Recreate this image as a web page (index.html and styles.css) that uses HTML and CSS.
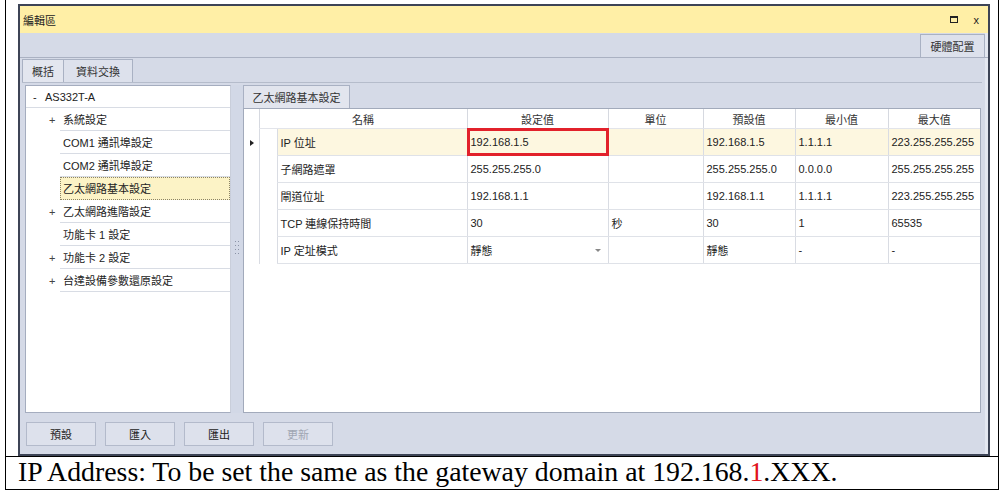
FILE: index.html
```html
<!DOCTYPE html>
<html lang="zh-Hant">
<head>
    <meta charset="UTF-8">
    <title>編輯區</title>
    <link rel="stylesheet" href="styles.css">
</head>
<body>
    <div class="doc">
        <div class="shot">
            <div class="window">
                <div class="titlebar">
                    <span class="title">編輯區</span>
                    <div class="ctrls">
                        <span class="max-btn"></span>
                        <span class="close-btn">x</span>
                    </div>
                </div>
                <div class="win-body">
                    <div class="top-tabs">
                        <div class="tab hw-tab">硬體配置</div>
                    </div>
                    <div class="main">
                        <div class="sub-tabs">
                            <div class="tab sub-tab active">概括</div>
                            <div class="tab sub-tab">資料交換</div>
                        </div>
                        <div class="workspace">
                            <div class="tree">
                                <div class="tree-root"><span class="exp">-</span>AS332T-A</div>
                                <div class="tree-row"><span class="exp">+</span><span class="label">系統設定</span></div>
                                <div class="tree-row"><span class="exp"></span><span class="label">COM1 通訊埠設定</span></div>
                                <div class="tree-row"><span class="exp"></span><span class="label">COM2 通訊埠設定</span></div>
                                <div class="tree-row"><span class="exp"></span><span class="label selected">乙太網路基本設定</span></div>
                                <div class="tree-row"><span class="exp">+</span><span class="label">乙太網路進階設定</span></div>
                                <div class="tree-row"><span class="exp"></span><span class="label">功能卡 1 設定</span></div>
                                <div class="tree-row"><span class="exp">+</span><span class="label">功能卡 2 設定</span></div>
                                <div class="tree-row"><span class="exp">+</span><span class="label">台達設備參數還原設定</span></div>
                            </div>
                            <div class="splitter">
                                <svg class="grip" width="4" height="14" viewBox="0 0 4 14">
                                    <g fill="#8a92a6">
                                        <rect x="0" y="0" width="1" height="1"/><rect x="3" y="0" width="1" height="1"/>
                                        <rect x="0" y="4" width="1" height="1"/><rect x="3" y="4" width="1" height="1"/>
                                        <rect x="0" y="8" width="1" height="1"/><rect x="3" y="8" width="1" height="1"/>
                                        <rect x="0" y="12" width="1" height="1"/><rect x="3" y="12" width="1" height="1"/>
                                    </g>
                                </svg>
                            </div>
                            <div class="detail">
                                <div class="detail-tabs">
                                    <div class="tab detail-tab">乙太網路基本設定</div>
                                </div>
                                <div class="grid-box">
                                    <table class="grid">
                                        <colgroup>
                                            <col style="width:15px"><col style="width:18px"><col style="width:190px">
                                            <col style="width:141px"><col style="width:95px"><col style="width:92px">
                                            <col style="width:93px"><col style="width:92px">
                                        </colgroup>
                                        <thead>
                                            <tr>
                                                <th class="ind"></th>
                                                <th colspan="2">名稱</th>
                                                <th>設定值</th>
                                                <th>單位</th>
                                                <th>預設值</th>
                                                <th>最小值</th>
                                                <th>最大值</th>
                                            </tr>
                                        </thead>
                                        <tbody>
                                            <tr class="current">
                                                <td class="ind"><span class="arrow"></span></td>
                                                <td class="indent"></td>
                                                <td>IP 位址</td>
                                                <td class="boxed">192.168.1.5</td>
                                                <td></td>
                                                <td>192.168.1.5</td>
                                                <td>1.1.1.1</td>
                                                <td>223.255.255.255</td>
                                            </tr>
                                            <tr>
                                                <td class="ind"></td>
                                                <td class="indent"></td>
                                                <td>子網路遮罩</td>
                                                <td>255.255.255.0</td>
                                                <td></td>
                                                <td>255.255.255.0</td>
                                                <td>0.0.0.0</td>
                                                <td>255.255.255.255</td>
                                            </tr>
                                            <tr>
                                                <td class="ind"></td>
                                                <td class="indent"></td>
                                                <td>閘道位址</td>
                                                <td>192.168.1.1</td>
                                                <td></td>
                                                <td>192.168.1.1</td>
                                                <td>1.1.1.1</td>
                                                <td>223.255.255.255</td>
                                            </tr>
                                            <tr>
                                                <td class="ind"></td>
                                                <td class="indent"></td>
                                                <td>TCP 連線保持時間</td>
                                                <td>30</td>
                                                <td>秒</td>
                                                <td>30</td>
                                                <td>1</td>
                                                <td>65535</td>
                                            </tr>
                                            <tr>
                                                <td class="ind"></td>
                                                <td class="indent"></td>
                                                <td>IP 定址模式</td>
                                                <td class="combo">靜態<span class="drop"></span></td>
                                                <td></td>
                                                <td>靜態</td>
                                                <td>-</td>
                                                <td>-</td>
                                            </tr>
                                        </tbody>
                                    </table>
                                </div>
                            </div>
                        </div>
                        <div class="buttons">
                            <button class="btn">預設</button>
                            <button class="btn">匯入</button>
                            <button class="btn">匯出</button>
                            <button class="btn" disabled>更新</button>
                        </div>
                    </div>
                </div>
            </div>
        </div>
        <div class="caption">IP Address: To be set the same as the gateway domain at 192.168.<span class="red">1</span>.XXX.</div>
    </div>
</body>
</html>
```

FILE: styles.css
```css
body {
    margin: 0;
    background-color: #fff;
    font-family: "Liberation Sans", "Noto Sans CJK TC", sans-serif;
    font-size: 11px;
    color: #222;
}

.doc {
    box-sizing: border-box;
    width: 994px;
    margin-left: 5px;
    border-left: 1px solid #000;
    border-right: 1px solid #000;
    border-bottom: 1px solid #000;
}

.shot {
    height: 456px;
    padding: 4px 0 0 12px;
    box-sizing: border-box;
}

.window {
    box-sizing: border-box;
    width: 972px;
    height: 452px;
    border: 2px solid #3d4456;
    display: flex;
    flex-direction: column;
    background-color: #d5dae7;
}

.titlebar {
    height: 27px;
    background-color: #ffefa6;
    display: flex;
    align-items: center;
    justify-content: space-between;
    padding: 0 9px 0 3px;
}

.title {
    font-size: 11px;
    color: #222;
}

.ctrls {
    display: flex;
    align-items: center;
    gap: 16px;
}

.max-btn {
    width: 6px;
    height: 4px;
    border: 1px solid #222;
    border-top-width: 2px;
}

.close-btn {
    font-size: 11px;
    color: #222;
}

.win-body {
    flex: 1;
    display: flex;
    flex-direction: column;
    box-shadow: inset -3px 0 0 #e4e8f1;
}

.tab {
    box-sizing: border-box;
    border: 1px solid #a9b1c3;
    border-bottom: none;
    display: flex;
    align-items: center;
    justify-content: center;
    background-color: #dde1ec;
    color: #333;
}

.top-tabs {
    height: 24px;
    display: flex;
    justify-content: flex-end;
    align-items: flex-end;
    border-bottom: 1px solid #aab1c2;
    padding-right: 3px;
}

.hw-tab {
    width: 65px;
    height: 23px;
}

.main {
    flex: 1;
    display: flex;
    flex-direction: column;
    padding: 0 6px 0 2px;
}

.sub-tabs {
    display: flex;
    height: 23px;
    margin-top: 1px;
}

.sub-tab {
    height: 23px;
    padding: 0 9px;
}

.sub-tab + .sub-tab {
    border-left: none;
    padding: 0 12px;
}

.sub-tab.active {
    background-color: #e3e6ef;
}

.workspace {
    height: 331px;
    box-sizing: border-box;
    border-top: 1px solid #b5bccb;
    padding: 2px 0 0 3px;
    display: flex;
}

.tree {
    box-sizing: border-box;
    width: 206px;
    height: 328px;
    background-color: #fff;
    border: 1px solid #a5adbf;
    border-right-color: #c9ceda;
}

.tree-root {
    height: 22px;
    box-sizing: border-box;
    border-bottom: 1px solid #d8dce4;
    display: flex;
    align-items: center;
    padding-left: 7px;
}

.tree-root .exp {
    width: 12px;
}

.tree-row {
    height: 23px;
    display: flex;
}

.tree-row .exp {
    width: 34px;
    padding: 3px 0 0 23px;
    box-sizing: border-box;
    line-height: 19px;
    color: #444;
}

.tree-row .label {
    flex: 1;
    box-sizing: border-box;
    border-bottom: 1px solid #d8dce4;
    padding: 3px 0 0 3px;
    line-height: 19px;
}

.tree-row .label.selected {
    background-color: #fcf3c6;
    border: 1px dotted #8c8466;
    padding: 2px 0 0 2px;
    line-height: 19px;
}

.splitter {
    width: 12px;
    display: flex;
    justify-content: center;
    background-color: #d2d8e6;
}

.grip {
    margin-top: 156px;
}

.detail {
    width: 738px;
    display: flex;
    flex-direction: column;
}

.detail-tabs {
    display: flex;
    height: 23px;
}

.detail-tab {
    width: 107px;
    height: 23px;
    background-color: #e2e5ee;
}

.grid-box {
    flex: 1;
    background-color: #fff;
    border: 1px solid #a2aabb;
}

.grid {
    border-collapse: collapse;
    table-layout: fixed;
    width: 736px;
}

.grid th {
    height: 19px;
    font-weight: normal;
    color: #333;
    border-left: 1px solid #d6d9e0;
    border-bottom: 1px solid #e2e4ea;
    padding: 0;
}

.grid td {
    height: 26px;
    padding: 0 0 0 3px;
    border-left: 1px solid #d9dce3;
    border-bottom: 1px solid #dfe2e8;
    white-space: nowrap;
    position: relative;
}

.grid th.ind,
.grid td.ind {
    border-left: none;
    border-bottom: none;
}

.grid td.indent {
    border-bottom: none;
}

.grid tr.current td {
    background-color: #fdf7e0;
}

.grid tr.current td.ind,
.grid tr.current td.indent {
    background-color: #fff;
}

.arrow {
    display: inline-block;
    width: 0;
    height: 0;
    margin-left: 3px;
    border-top: 3px solid transparent;
    border-bottom: 3px solid transparent;
    border-left: 4px solid #222;
}

.grid td.boxed::after {
    content: "";
    position: absolute;
    left: -1px;
    top: -1px;
    right: -1px;
    bottom: -1px;
    border: 3px solid #e2212b;
}

.drop {
    position: absolute;
    right: 7px;
    top: 12px;
    border-left: 3px solid transparent;
    border-right: 3px solid transparent;
    border-top: 3px solid #888;
}

.buttons {
    display: flex;
    gap: 9px;
    margin-top: 9px;
    padding-left: 4px;
}

.btn {
    width: 70px;
    height: 24px;
    box-sizing: border-box;
    background-color: #dde1ec;
    border: 1px solid #b3bacb;
    font-family: "Liberation Sans", "Noto Sans CJK TC", sans-serif;
    font-size: 11px;
    color: #222;
    padding: 0;
}

.btn:disabled {
    color: #a0a6b3;
}

.caption {
    border-top: 1px solid #000;
    height: 33px;
    box-sizing: border-box;
    padding-left: 12px;
    font-family: "Liberation Serif", serif;
    font-size: 27.8px;
    line-height: 30px;
    color: #000;
}

.red {
    color: #e1141c;
}
```
